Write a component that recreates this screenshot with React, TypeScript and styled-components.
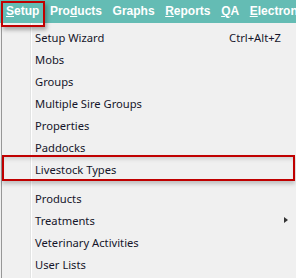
import React from "react";
import styled, { createGlobalStyle } from "styled-components";

const GlobalStyle = createGlobalStyle`
  html, body {
    margin: 0;
    padding: 0;
    background: #f0f0f0;
    overflow: hidden;
  }
`;

const Page = styled.div`
  width: 296px;
  height: 278px;
  overflow: hidden;
  background: #f0f0f0;
`;

const MenuBar = styled.div`
  display: flex;
  height: 23px;
  background: #64bcb4;
  padding-left: 0.7px;
  white-space: nowrap;
`;

const MenuTitle = styled.div<{ boxed?: boolean }>`
  position: relative;
  padding: 0 5.3px;
  font-family: "Liberation Sans", Arial, sans-serif;
  font-weight: bold;
  font-size: 12px;
  line-height: 23px;
  color: #ffffff;
  ${({ boxed }) =>
    boxed &&
    `
    &::after {
      content: "";
      position: absolute;
      left: 0;
      top: 1px;
      right: 0;
      height: 22px;
      border: 2px solid #c00000;
      box-shadow: 2px 3px 4px rgba(0, 0, 0, 0.3);
      z-index: 2;
    }
  `}
`;

const Key = styled.span`
  text-decoration: underline;
  text-underline-offset: 1px;
`;

const Dropdown = styled.div`
  position: relative;
  border-left: 1px solid #979797;
  margin-left: 1px;
  padding-top: 3px;
  height: 255px;
  background: #f0f0f0;
  &::before {
    content: "";
    position: absolute;
    left: 28px;
    top: 0;
    bottom: 0;
    width: 1px;
    background: #e2e3e3;
    border-right: 1px solid #ffffff;
  }
`;

const Item = styled.div<{ boxed?: boolean }>`
  position: relative;
  display: flex;
  align-items: center;
  height: 22px;
  padding-left: 33px;
  padding-right: 15px;
  font-family: "Noto Sans", "Segoe UI", sans-serif;
  font-size: 11.2px;
  color: #15152a;
  ${({ boxed }) =>
    boxed &&
    `
    &::after {
      content: "";
      position: absolute;
      left: 0;
      right: 1px;
      top: -3px;
      bottom: -1px;
      border: 2px solid #c00000;
      box-shadow: 0 3px 4px rgba(0, 0, 0, 0.2), inset 0 4px 4px -2px rgba(0, 0, 0, 0.15);
    }
  `}
`;

const Label = styled.span`
  flex: 1;
`;

const Shortcut = styled.span`
  color: #15152a;
`;

const Arrow = styled.span`
  width: 0;
  height: 0;
  margin-right: -7px;
  border-top: 3.5px solid transparent;
  border-bottom: 3.5px solid transparent;
  border-left: 4px solid #333333;
`;

const Separator = styled.div`
  height: 7px;
`;

const top = [
  "Setup Wizard",
  "Mobs",
  "Groups",
  "Multiple Sire Groups",
  "Properties",
  "Paddocks",
];

const bottom = ["Products", "Treatments", "Veterinary Activities", "User Lists"];

export default function App() {
  return (
    <Page>
      <GlobalStyle />
      <MenuBar>
        <MenuTitle boxed>
          <Key>S</Key>etup
        </MenuTitle>
        <MenuTitle>
          Pro<Key>d</Key>ucts
        </MenuTitle>
        <MenuTitle>Graphs</MenuTitle>
        <MenuTitle>
          <Key>R</Key>eports
        </MenuTitle>
        <MenuTitle>
          <Key>Q</Key>A
        </MenuTitle>
        <MenuTitle>
          <Key>E</Key>lectronic
        </MenuTitle>
      </MenuBar>
      <Dropdown>
        {top.map((label, i) => (
          <Item key={label}>
            <Label>{label}</Label>
            {i === 0 && <Shortcut>Ctrl+Alt+Z</Shortcut>}
          </Item>
        ))}
        <Item boxed>
          <Label>Livestock Types</Label>
        </Item>
        <Separator />
        {bottom.map((label) => (
          <Item key={label}>
            <Label>{label}</Label>
            {label === "Treatments" && <Arrow />}
          </Item>
        ))}
      </Dropdown>
    </Page>
  );
}
